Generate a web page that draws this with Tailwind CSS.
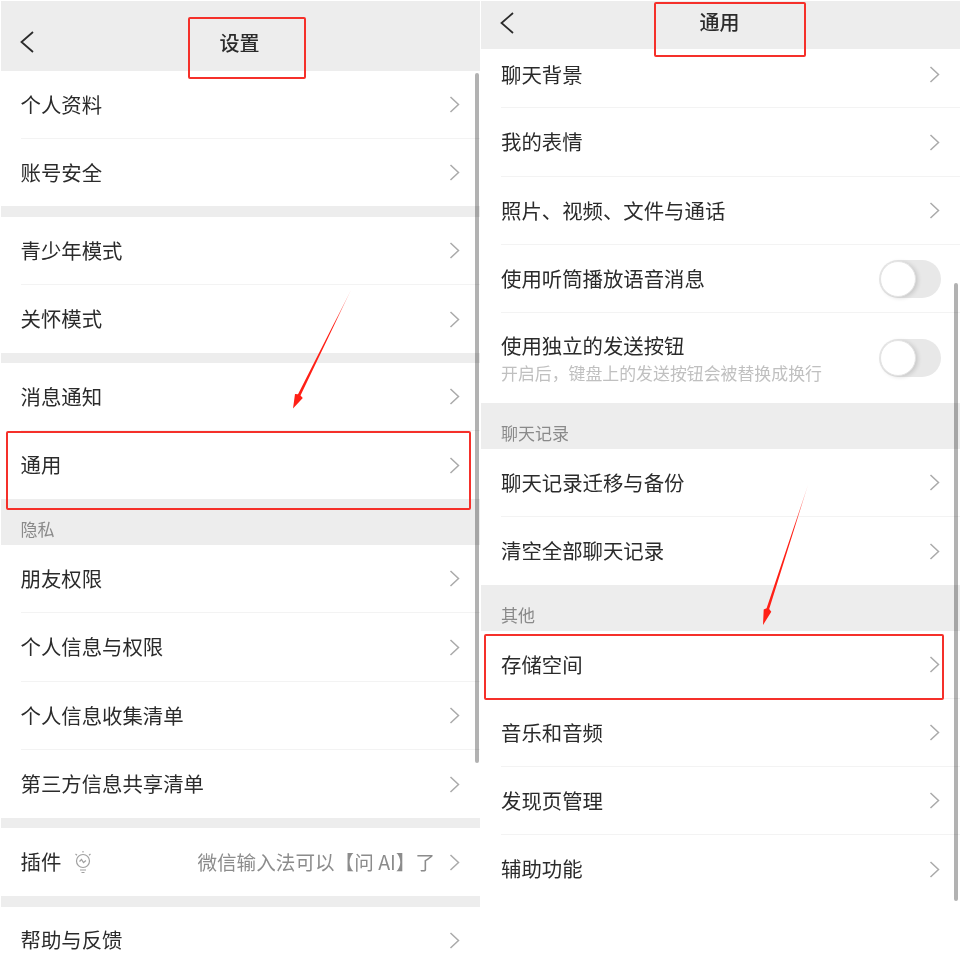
<!DOCTYPE html>
<html lang="zh-CN">
<head>
  <meta charset="UTF-8">
  <meta name="viewport" content="width=device-width, initial-scale=1.0">
  <title>设置 / 通用</title>
  <script src="https://cdn.jsdelivr.net/npm/@tailwindcss/browser@4"></script>
</head>
<body class="bg-white text-[#2b2b2b] font-['Noto_Sans_CJK_SC','Noto_Sans',sans-serif]">
  <div class="relative w-[960px] h-[973px] overflow-hidden grid grid-cols-[481px_479px] pt-px blur-[0.4px]">

    <!-- left phone -->
    <section id="settings" class="relative ml-px mr-px h-[972px] overflow-hidden">
      <header class="h-[70px] pt-[12px] bg-[#ededed] grid grid-cols-[1fr_auto_1fr] items-center pl-[19px]">
        <svg class="w-[14px] h-[22px]" viewBox="0 0 14 22" fill="none" stroke="#2b2b2b" stroke-width="1.8"><path d="M13 1 1.500 11 13 21"/></svg>
        <h1 class="text-[20px] leading-none font-medium pr-[21px] mt-[2px]">设置</h1>
        <span></span>
      </header>
      <div id="settingsList"></div>
      <div class="absolute right-[1px] top-[72px] w-[4px] h-[690px] rounded-full bg-black/30"></div>
    </section>

    <!-- right phone -->
    <section id="general" class="relative h-[972px] overflow-hidden">
      <header class="h-[48px] pb-[4px] bg-[#ededed] grid grid-cols-[1fr_auto_1fr] items-center pl-[19px]">
        <svg class="w-[14px] h-[22px]" viewBox="0 0 14 22" fill="none" stroke="#2b2b2b" stroke-width="1.8"><path d="M13 1 1.500 11 13 21"/></svg>
        <h1 class="text-[20px] leading-none font-medium pr-[21px] -mt-[2px]">通用</h1>
        <span></span>
      </header>
      <div id="generalList"></div>
      <div class="absolute right-[2px] top-[282px] w-[4px] h-[618px] rounded-full bg-black/30"></div>
    </section>

    <!-- annotations -->
    <div class="absolute left-[188px] top-[17px] w-[118px] h-[62px] border-2 border-[#f5302a] rounded-[2px]"></div>
    <div class="absolute left-[654px] top-[2px] w-[152px] h-[55px] border-2 border-[#f5302a] rounded-[2px]"></div>
    <div class="absolute left-[6px] top-[431px] w-[465px] h-[79px] border-2 border-[#f5302a] rounded-[2px]"></div>
    <div class="absolute left-[484px] top-[634px] w-[460px] h-[66px] border-2 border-[#f5302a] rounded-[2px]"></div>
    <svg class="absolute inset-0 w-[960px] h-[973px] pointer-events-none" viewBox="0 0 960 973">
      <defs>
        <linearGradient id="fadeA" x1="351" y1="290" x2="293" y2="408" gradientUnits="userSpaceOnUse">
          <stop offset="0" stop-color="#ff2016" stop-opacity="0.3"/>
          <stop offset="0.3" stop-color="#ff2016"/>
        </linearGradient>
        <linearGradient id="fadeB" x1="808" y1="485" x2="763" y2="624" gradientUnits="userSpaceOnUse">
          <stop offset="0" stop-color="#ff2016" stop-opacity="0.3"/>
          <stop offset="0.3" stop-color="#ff2016"/>
        </linearGradient>
      </defs>
      <polygon fill="url(#fadeA)" points="351,290 300.500,395.500 302.800,398 293,408.500 295,394 298,394.300"/>
      <polygon fill="url(#fadeB)" points="808,485 769.200,609.100 771.300,611.800 763,625 763.700,609.400 766.600,608.300"/>
    </svg>
  </div>

  <script>
    const chevron = `<svg class="w-[11px] h-[17px] shrink-0" viewBox="0 0 11 17" fill="none" stroke="#aaaaaa" stroke-width="1.5"><path d="M1.500 1 9.500 8.500 1.500 16"/></svg>`;
    const toggle = `<span class="relative block w-[62px] h-[38px] -mr-[1px] rounded-full bg-[#e8e8e8] shrink-0"><span class="absolute left-[1px] top-[1px] w-[36px] h-[36px] rounded-full bg-white border border-[#e4e4e4] shadow-[2px_1px_4px_rgba(0,0,0,0.14)]"></span></span>`;
    const bulb = `<svg class="w-[20px] h-[24px] ml-[12px]" viewBox="0 0 20 24" fill="none" stroke="#a0a0a0" stroke-width="1.2"><circle cx="10" cy="11" r="6.500"/><path d="M6.500 11.500 8.500 9.500 10.500 12.500 13 10.500M7 20h6M8.500 22.500h3M10 1v1.500M2.500 4 4 5.200M17.500 4 16 5.200"/></svg>`;

    const settings = [
      { h: 68, label: "个人资料", line: true },
      { h: 67, label: "账号安全" },
      { gap: 11 },
      { h: 68, label: "青少年模式", line: true },
      { h: 68, label: "关怀模式" },
      { gap: 10 },
      { h: 68, label: "消息通知", line: true },
      { h: 68, label: "通用" },
      { title: "隐私" },
      { h: 68, label: "朋友权限", line: true },
      { h: 69, label: "个人信息与权限", line: true },
      { h: 68, label: "个人信息收集清单", line: true },
      { h: 68, label: "第三方信息共享清单" },
      { gap: 10 },
      { h: 68, label: "插件", icon: bulb, value: "微信输入法可以【问 AI】了" },
      { gap: 11 },
      { h: 66, label: "帮助与反馈" }
    ];

    const general = [
      { h: 59, label: "聊天背景", line: true, top: true },
      { h: 69, label: "我的表情", line: true },
      { h: 68, label: "照片、视频、文件与通话", line: true },
      { h: 68, label: "使用听筒播放语音消息", line: true, toggle: true },
      { h: 90, label: "使用独立的发送按钮", sub: "开启后，键盘上的发送按钮会被替换成换行", toggle: true },
      { title: "聊天记录" },
      { h: 68, label: "聊天记录迁移与备份", line: true },
      { h: 68, label: "清空全部聊天记录" },
      { title: "其他" },
      { h: 68, label: "存储空间", line: true },
      { h: 68, label: "音乐和音频", line: true },
      { h: 68, label: "发现页管理", line: true },
      { h: 68, label: "辅助功能" }
    ];

    function renderRow(row, inset) {
      if (row.gap) return `<div class="bg-[#ededed]" style="height:${row.gap}px"></div>`;
      if (row.title) return `<div class="h-[46px] bg-[#ededed] pt-[17px] text-[17px] leading-[25px] text-[#8a8a8a]"><div class="${inset}">${row.title}</div></div>`;

      const sub = row.sub ? `<p class="text-[16.9px] leading-[24px] text-[#c0c0c0] mt-[1px]">${row.sub}</p>` : "";
      const value = row.value ? `<span class="ml-auto mr-[14px] text-[19.6px] text-[#8c8c8c] whitespace-nowrap">${row.value}</span>` : "";
      const right = row.toggle ? toggle : chevron;
      const line = row.line ? "border-b border-[#f3f3f3]" : "";
      const shift = row.top ? "pb-[7px]" : "";
      return `<div class="${inset} flex items-center ${line} ${shift} pr-[20px]" style="height:${row.h}px">
        <div class="text-[20.4px] leading-[30px] whitespace-nowrap pb-[2px]">${row.label}${sub}</div>
        ${row.icon || ""}
        ${value}
        <span class="${row.value ? "" : "ml-auto"} flex items-center">${right}</span>
      </div>`;
    }

    document.getElementById("settingsList").innerHTML = settings.map((row) => renderRow(row, "ml-[19.5px]")).join("");
    document.getElementById("generalList").innerHTML = general.map((row) => renderRow(row, "ml-[20px]")).join("");
  </script>
</body>
</html>
